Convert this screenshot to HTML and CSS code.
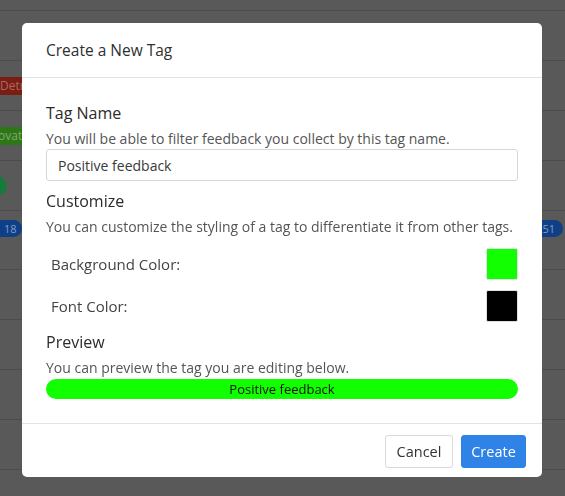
FILE: index.html
```html
<!DOCTYPE html>
<html>
<head>
<meta charset="utf-8">
<link rel="stylesheet" href="styles.css">
</head>
<body>
<div class="page">
  <div class="row row-top"></div>
  <div class="row"></div>
  <div class="row"><span class="badge badge-red">Detroit</span></div>
  <div class="row"><span class="badge badge-green">Innovation</span></div>
  <div class="row"><span class="dot"></span></div>
  <div class="row row-tall"><span class="pill pill-left">18</span><span class="pill pill-right">251</span></div>
  <div class="row"></div>
  <div class="row"></div>
  <div class="row"></div>
  <div class="row"></div>
</div>

<div class="overlay">
  <div class="modal">
    <div class="modal-header">
      <h2 class="modal-title">Create a New Tag</h2>
    </div>
    <div class="modal-body">
      <h3 class="section-title">Tag Name</h3>
      <p class="section-desc">You will be able to filter feedback you collect by this tag name.</p>
      <input class="text-input" type="text" value="Positive feedback">

      <h3 class="section-title gap">Customize</h3>
      <p class="section-desc">You can customize the styling of a tag to differentiate it from other tags.</p>
      <div class="color-rows">
        <div class="color-row">
          <span class="color-label">Background Color:</span>
          <span class="swatch swatch-green"></span>
        </div>
        <div class="color-row">
          <span class="color-label">Font Color:</span>
          <span class="swatch swatch-black"></span>
        </div>
      </div>

      <h3 class="section-title gap">Preview</h3>
      <p class="section-desc">You can preview the tag you are editing below.</p>
      <div class="preview-tag">Positive feedback</div>
    </div>
    <div class="modal-footer">
      <button class="btn btn-cancel">Cancel</button>
      <button class="btn btn-create">Create</button>
    </div>
  </div>
</div>
</body>
</html>
```

FILE: styles.css
```css
* { box-sizing: border-box; }

html, body {
  margin: 0;
  padding: 0;
}

body {
  background: #595959;
  font-family: "Open Sans", "Liberation Sans", sans-serif;
  width: 565px;
  height: 496px;
  overflow: hidden;
}

.page {
  display: flex;
  flex-direction: column;
}

.row {
  height: 50px;
  border-bottom: 1px solid #4c4c4c;
  display: flex;
  align-items: center;
}

.row-top { height: 11px; }
.row-tall { height: 59px; align-items: flex-start; padding-top: 9px; }

.badge {
  font-size: 12px;
  line-height: 18px;
  padding: 0 4px;
  border-radius: 2px;
}

.badge-red { background: #7a1d12; color: #a86a63; margin-left: -4px; }
.badge-green { background: #2d7716; color: #7fa86f; margin-left: -24px; }

.dot {
  width: 20px;
  height: 20px;
  border-radius: 50%;
  background: #177a3c;
  margin-left: -13px;
}

.pill {
  height: 17px;
  line-height: 17px;
  font-size: 11px;
  border-radius: 9px;
  background: #0f3f86;
  color: #7f9cc6;
  padding: 0 5px;
}

.pill-left { margin-left: -8px; padding-left: 12px; }
.pill-right { margin-left: auto; margin-right: 2px; padding: 0 8px 0 5px; }

.overlay {
  position: fixed;
  inset: 0;
}

.modal {
  position: absolute;
  left: 22px;
  top: 23px;
  width: 520px;
  height: 454px;
  background: #fff;
  border-radius: 5px;
  display: flex;
  flex-direction: column;
  color: #333;
}

.modal-header {
  height: 55px;
  border-bottom: 1px solid #e3e3e3;
  display: flex;
  align-items: center;
  padding: 0 24px;
}

.modal-title {
  margin: 0;
  font-size: 15.5px;
  font-weight: 400;
  color: #2f2f2f;
}

.modal-body {
  padding: 24px 24px 24px;
  border-bottom: 1px solid #e3e3e3;
}

.section-title {
  margin: 0;
  font-size: 16px;
  line-height: 22px;
  font-weight: 400;
  color: #2b2b2b;
}

.section-title.gap { margin-top: 9px; }

.section-desc {
  margin: 5px 0 0;
  font-size: 14px;
  line-height: 20px;
  color: #555;
}

.text-input {
  display: block;
  width: 100%;
  height: 32px;
  border: 1px solid #d6d6dc;
  border-radius: 3px;
  padding: 0 11px;
  font-family: inherit;
  font-size: 14px;
  color: #3a3a3a;
  outline: none;
}

.color-rows {
  display: flex;
  flex-direction: column;
  gap: 10px;
  margin-top: 11px;
  padding-left: 5px;
}

.color-row {
  display: flex;
  align-items: center;
  justify-content: space-between;
}

.color-label {
  font-size: 15px;
  color: #444;
}

.swatch {
  width: 32px;
  height: 32px;
  border-radius: 2px;
  border: 1px solid #e0e0e0;
}

.swatch-green { background: #11ff00; }
.swatch-black { background: #000; }

.preview-tag {
  margin-top: 1px;
  height: 20px;
  line-height: 20px;
  border-radius: 10px;
  background: #11ff00;
  color: #111;
  font-size: 13px;
  text-align: center;
}

.modal-footer {
  flex: 1;
  display: flex;
  justify-content: flex-end;
  align-items: flex-start;
  gap: 8px;
  padding: 11px 16px 0;
}

.btn {
  height: 33px;
  border-radius: 3px;
  font-family: inherit;
  font-size: 14.5px;
  padding: 0 10px;
  cursor: pointer;
}

.btn-cancel {
  background: #fff;
  border: 1px solid #d8d8de;
  color: #333;
  width: 68px;
}

.btn-create {
  background: #2f82e6;
  border: 1px solid #2f82e6;
  color: #fff;
  width: 65px;
  padding: 0;
}
```
